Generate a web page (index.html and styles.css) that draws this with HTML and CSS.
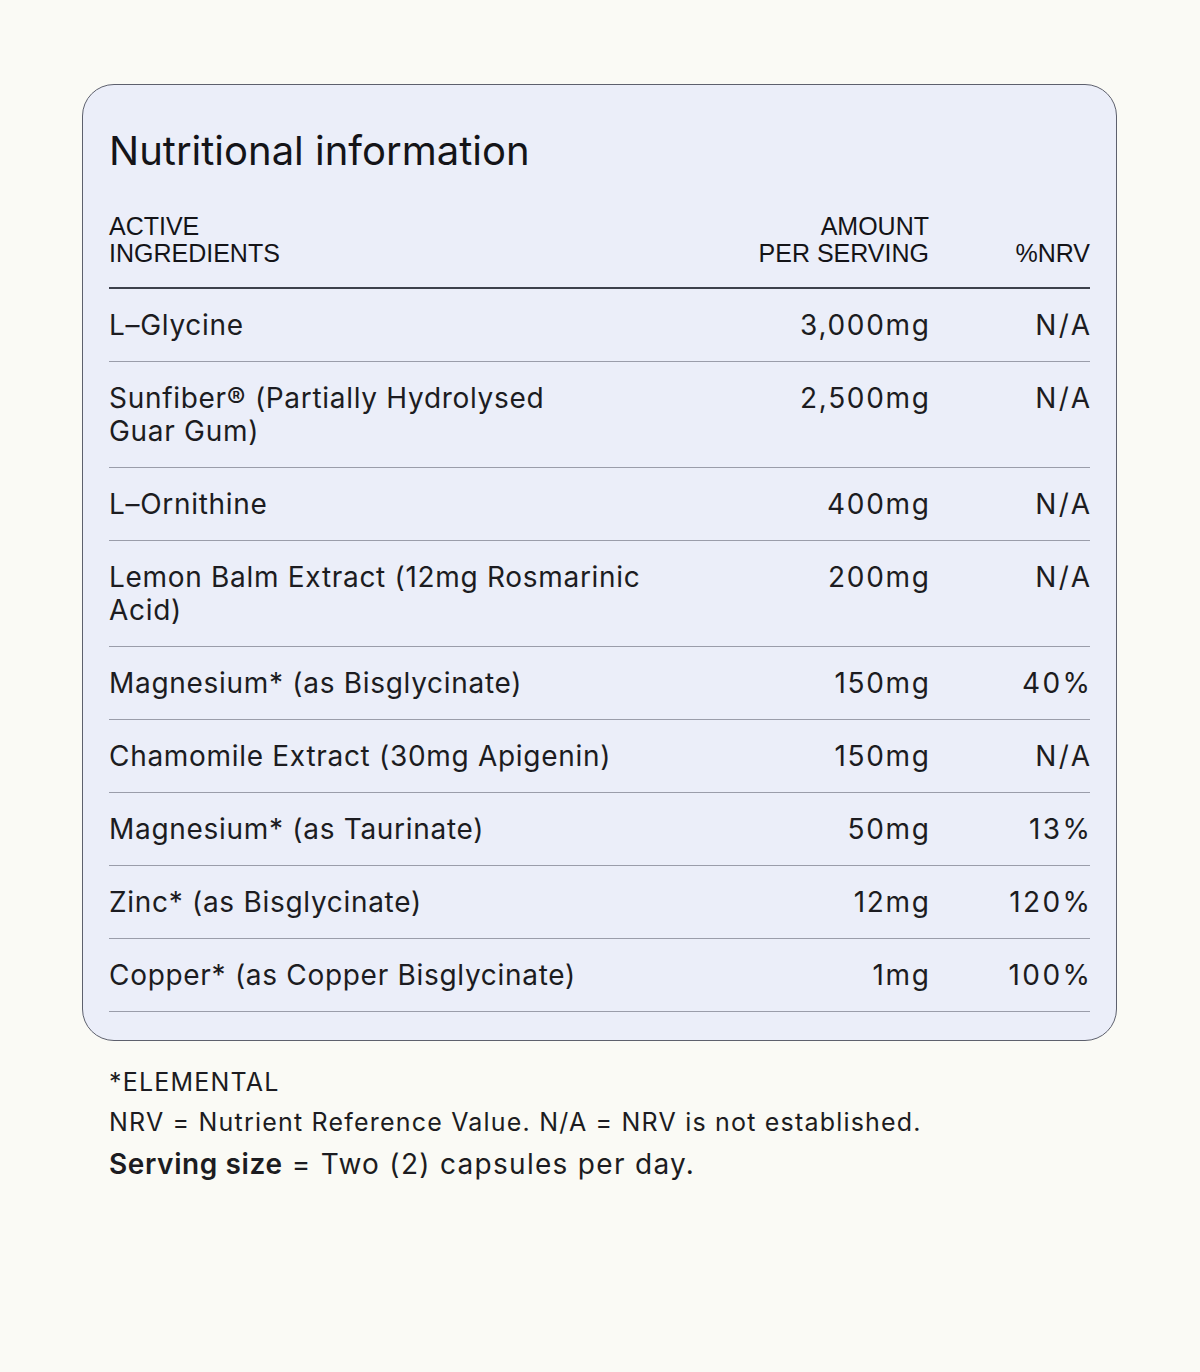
FILE: index.html
```html
<!DOCTYPE html>
<html lang="en">
<head>
<meta charset="utf-8">
<title>Nutritional information</title>
<link rel="stylesheet" href="styles.css">
</head>
<body>
<main class="page">
  <section class="card">
    <h1 class="title">Nutritional information</h1>
    <div class="table">
      <div class="row head">
        <div class="c-name">ACTIVE<br>INGREDIENTS</div>
        <div class="c-amt">AMOUNT<br>PER SERVING</div>
        <div class="c-nrv">%NRV</div>
      </div>
      <div class="row">
        <div class="c-name">L–Glycine</div>
        <div class="c-amt">3,000mg</div>
        <div class="c-nrv">N/A</div>
      </div>
      <div class="row">
        <div class="c-name">Sunfiber® (Partially Hydrolysed<br>Guar Gum)</div>
        <div class="c-amt">2,500mg</div>
        <div class="c-nrv">N/A</div>
      </div>
      <div class="row">
        <div class="c-name">L–Ornithine</div>
        <div class="c-amt">400mg</div>
        <div class="c-nrv">N/A</div>
      </div>
      <div class="row">
        <div class="c-name">Lemon Balm Extract (12mg Rosmarinic<br>Acid)</div>
        <div class="c-amt">200mg</div>
        <div class="c-nrv">N/A</div>
      </div>
      <div class="row">
        <div class="c-name">Magnesium* (as Bisglycinate)</div>
        <div class="c-amt">150mg</div>
        <div class="c-nrv">40%</div>
      </div>
      <div class="row">
        <div class="c-name">Chamomile Extract (30mg Apigenin)</div>
        <div class="c-amt">150mg</div>
        <div class="c-nrv">N/A</div>
      </div>
      <div class="row">
        <div class="c-name">Magnesium* (as Taurinate)</div>
        <div class="c-amt">50mg</div>
        <div class="c-nrv">13%</div>
      </div>
      <div class="row">
        <div class="c-name">Zinc* (as Bisglycinate)</div>
        <div class="c-amt">12mg</div>
        <div class="c-nrv">120%</div>
      </div>
      <div class="row">
        <div class="c-name">Copper* (as Copper Bisglycinate)</div>
        <div class="c-amt">1mg</div>
        <div class="c-nrv">100%</div>
      </div>
    </div>
  </section>
  <div class="notes">
    <p class="note">*ELEMENTAL</p>
    <p class="note">NRV = Nutrient Reference Value. N/A = NRV is not established.</p>
    <p class="note serving"><strong>Serving size</strong> = Two (2) capsules per day.</p>
  </div>
</main>
</body>
</html>
```
FILE: styles.css
```css
* { box-sizing: border-box; }

body {
  margin: 0;
  background: #fafaf5;
  color: #1c1c21;
  font-family: Inter, "Noto Sans", sans-serif;
}

.page {
  padding: 84px 83px 0 82px;
}

.card {
  background: #ebeef9;
  border: 1px solid #5d606d;
  border-radius: 32px;
  padding: 42px 26px 28px 26px;
}

.title {
  margin: 0 0 38px 0;
  font-size: 40px;
  line-height: 48px;
  font-weight: 400;
  letter-spacing: 0;
  color: #141418;
}

.table {
  display: flex;
  flex-direction: column;
}

.row {
  display: grid;
  grid-template-columns: 1fr 260px 161px;
  padding: 20px 0 19px 0;
  border-bottom: 1px solid #9a9daa;
  font-size: 28px;
  line-height: 33px;
}

.row .c-name {
  letter-spacing: 0.7px;
}

.row .c-amt {
  letter-spacing: 1.7px;
  margin-right: -1.7px;
}

.row .c-nrv {
  letter-spacing: 2.4px;
  margin-right: -2.4px;
}

.row.head {
  align-items: end;
  padding: 0 0 20px 0;
  border-bottom: 2px solid #3d404c;
  font-family: "Liberation Sans", Arial, sans-serif;
  font-size: 25px;
  line-height: 27px;
  color: #141418;
}

.row.head .c-name,
.row.head .c-amt,
.row.head .c-nrv {
  letter-spacing: 0;
  margin-right: 0;
}

.c-amt, .c-nrv {
  text-align: right;
}

.notes {
  padding: 21px 0 0 27px;
}

.note {
  margin: 0;
  font-size: 25px;
  line-height: 40px;
  letter-spacing: 1.2px;
}

.note.serving {
  font-size: 28px;
  line-height: 44px;
  letter-spacing: 1.3px;
}

.note.serving strong {
  font-weight: 600;
  letter-spacing: 0.6px;
}
```
